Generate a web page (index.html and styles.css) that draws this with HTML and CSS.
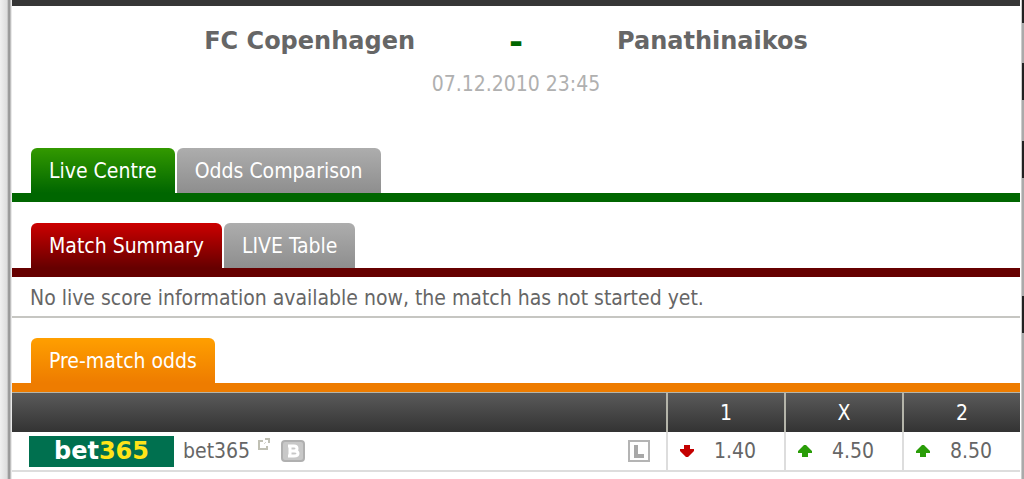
FILE: index.html
```html
<!DOCTYPE html>
<html lang="en">
<head>
    <meta charset="UTF-8">
    <meta name="viewport" content="width=device-width, initial-scale=1.0">
    <title>FC Copenhagen - Panathinaikos</title>
    <link rel="stylesheet" href="styles.css">
</head>
<body>
    <main class="page">
        <header class="match">
            <h1 class="teams">
                <span class="home">FC Copenhagen</span>
                <span class="score">-</span>
                <span class="away">Panathinaikos</span>
            </h1>
            <time class="date" datetime="2010-12-07T23:45">07.12.2010 23:45</time>
        </header>

        <nav class="tabs green">
            <a href="#live" class="tab active">Live Centre</a>
            <a href="#odds" class="tab">Odds Comparison</a>
        </nav>

        <nav class="tabs red">
            <a href="#summary" class="tab active">Match Summary</a>
            <a href="#table" class="tab">LIVE Table</a>
        </nav>
        <p class="info">No live score information available now, the match has not started yet.</p>

        <nav class="tabs orange">
            <a href="#prematch" class="tab active">Pre-match odds</a>
        </nav>
        <table class="odds">
            <thead>
                <tr>
                    <th class="bookmaker"></th>
                    <th>1</th>
                    <th>X</th>
                    <th>2</th>
                </tr>
            </thead>
            <tbody>
                <tr>
                    <td class="bookmaker">
                        <div class="row">
                            <a href="#bet365" class="logo">bet<span>365</span></a>
                            <a href="#bet365" class="name">bet365</a>
                            <svg class="external" width="12" height="12" viewBox="0 0 12 12">
                                <path d="M5 3H1V11H9V8M7 1H11V5" fill="none" stroke="#c0c0b4" stroke-width="2"/>
                                <path d="M8 4L6 6" fill="none" stroke="#d4d4cc" stroke-width="1"/>
                            </svg>
                            <svg class="bonus" width="24" height="22" viewBox="0 0 24 22">
                                <rect x="1" y="1" width="22" height="20" rx="3" fill="#c8c8c8" stroke="#b0b0b0" stroke-width="2"/>
                                <path d="M7 6H13Q16 6 16 8.500Q16 11 13 11H9M13 11Q17 11 17 13.500Q17 16 13 16H7M9 6V16" fill="none" stroke="#fff" stroke-width="3"/>
                            </svg>
                            <svg class="live" width="22" height="22" viewBox="0 0 22 22">
                                <rect x="1" y="1" width="20" height="20" fill="#fff" stroke="#b4b4b4" stroke-width="2"/>
                                <path d="M8 5V16H16" fill="none" stroke="#a8a8a8" stroke-width="4"/>
                            </svg>
                        </div>
                    </td>
                    <td>
                        <div class="odd">
                            <svg width="14" height="12" viewBox="0 0 14 12"><path d="M4 0H10V4H14V6L8 12H6L0 6V4H4Z" fill="#c40000"/></svg>
                            <span>1.40</span>
                        </div>
                    </td>
                    <td>
                        <div class="odd">
                            <svg width="14" height="12" viewBox="0 0 14 12"><path d="M4 12H10V8H14V6L8 0H6L0 6V8H4Z" fill="#2a9d08"/></svg>
                            <span>4.50</span>
                        </div>
                    </td>
                    <td>
                        <div class="odd">
                            <svg width="14" height="12" viewBox="0 0 14 12"><path d="M4 12H10V8H14V6L8 0H6L0 6V8H4Z" fill="#2a9d08"/></svg>
                            <span>8.50</span>
                        </div>
                    </td>
                </tr>
            </tbody>
        </table>
    </main>
</body>
</html>
```
FILE: styles.css
```css
* {
    box-sizing: border-box;
}
body {
    margin: 0;
    min-height: 100vh;
    padding: 0 4px 0 12px;
    background:
        linear-gradient(to right, #f0f0f0, #ddd 7px, #888 9px, #aaa 10px, #fff 12px) left / 12px 100% no-repeat,
        linear-gradient(#222 23px, #aaa 23px 63px, #222 63px 100px, #aaa 100px 141px, #222 141px 178px, #aaa 178px 296px, #222 296px 333px, #aaa 333px) right / 2px 100% no-repeat,
        linear-gradient(#ccc, #ccc) right / 3px 100% no-repeat,
        #fff;
    font-family: "DejaVu Sans Condensed", Tahoma, sans-serif;
    font-size: 21px;
    line-height: 26px;
    color: #666;
}
a {
    color: inherit;
    text-decoration: none;
}
.match {
    border-top: 6px solid #363636;
    padding-top: 20px;
    text-align: center;
    height: 148px;
}
.teams {
    display: grid;
    grid-template-columns: 1fr 202px 1fr;
    margin: 0 0 15px;
    font-family: "DejaVu Sans", Verdana, sans-serif;
    font-size: 24px;
    line-height: 30px;
}
.home {
    text-align: right;
}
.score {
    color: #060;
    font-size: 34px;
}
.away {
    text-align: left;
}
.date {
    color: #b0b0b0;
}
.tabs {
    display: flex;
    gap: 2px;
    padding-left: 19px;
    border-bottom: 9px solid;
}
.tab {
    height: 45px;
    padding: 10px 18px;
    border-radius: 6px 6px 0 0;
    background: linear-gradient(#adadad, #8e8e8e);
    color: #fff;
}
.green {
    border-color: #060;
    margin-bottom: 21px;
}
.green .active {
    background: linear-gradient(#390, #060);
}
.red {
    border-color: #600;
}
.red .active {
    background: linear-gradient(#c00, #600);
}
.orange {
    border-color: #ee7c00;
}
.orange .active {
    background: linear-gradient(#ff9f00, #ee7c00);
}
.info {
    margin: 0 0 20px;
    padding: 8px 18px 5px;
    border-bottom: 2px solid #c6c6c2;
}
.odds {
    width: 100%;
    border-collapse: separate;
    border-spacing: 0;
    table-layout: fixed;
}
.odds th, .odds td {
    width: 118px;
    height: 40px;
    padding: 0;
    border-left: 2px solid #ddd;
}
.odds th {
    border-color: #b5b5aa;
    border-top: 1px solid #b5b5aa;
    background: linear-gradient(#5a5a5a, #333);
    color: #fff;
    font-weight: normal;
}
.odds td {
    border-bottom: 2px solid #ddd;
}
.odds .bookmaker {
    width: auto;
    border-left: 0;
}
.row {
    display: flex;
    align-items: center;
    padding: 0 16px 0 17px;
}
.logo {
    width: 145px;
    background: #00704f;
    color: #fff;
    font-family: "DejaVu Sans", sans-serif;
    font-size: 24px;
    font-weight: bold;
    line-height: 31px;
    text-align: center;
}
.logo span {
    color: #ffe418;
}
.name {
    margin: 0 8px 0 9px;
}
.external {
    margin-bottom: 14px;
}
.bonus {
    margin-left: 11px;
}
.live {
    margin-left: auto;
}
.odd {
    display: flex;
    align-items: center;
    gap: 20px;
    padding-left: 12px;
}
```
